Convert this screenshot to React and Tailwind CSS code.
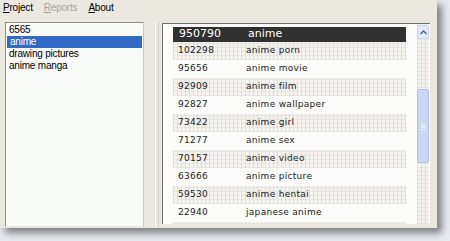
const rows = [
  ["102298", "anime porn"],
  ["95656", "anime movie"],
  ["92909", "anime film"],
  ["92827", "anime wallpaper"],
  ["73422", "anime girl"],
  ["71277", "anime sex"],
  ["70157", "anime video"],
  ["63666", "anime picture"],
  ["59530", "anime hentai"],
  ["22940", "japanese anime"],
]

const groups = ["6565", "anime", "drawing pictures", "anime manga"]

const pattern =
  "bg-[#f5f4f0] bg-[repeating-linear-gradient(90deg,#e2dfd7_0px,#e2dfd7_1px,transparent_1px,transparent_4px),repeating-linear-gradient(0deg,#e8e6df_0px,#e8e6df_1px,transparent_1px,transparent_4px)]"

function MenuBar() {
  return (
    <div className="flex h-[15px] items-center gap-[11px] px-[3px] text-[10px] tracking-[-0.2px] text-black">
      <span>
        <u>P</u>roject
      </span>
      <span className="text-[#a8a69c]">
        <u>R</u>eports
      </span>
      <span>
        <u>A</u>bout
      </span>
    </div>
  )
}

function GroupList() {
  return (
    <div className="h-[205px] w-[139px] border border-[#8f8d86] border-r-[#c9c6bd] border-b-[#e4e1d9] bg-[#f9fbf8] pt-px text-[10px] tracking-[-0.2px] text-black">
      {groups.map((g) => (
        <div
          key={g}
          className={`h-[12px] px-[3px] leading-[12px] ${g === "anime" ? "mx-px bg-[#316ac5] px-[2px] text-white" : ""}`}
        >
          {g}
        </div>
      ))}
    </div>
  )
}

function ScrollBar() {
  return (
    <div className={`flex w-[12px] flex-col ${pattern}`}>
      <div className="mt-px flex h-[14px] items-center justify-center rounded-[2px] border border-[#c6d3f1] bg-[#e2e9f9]">
        <svg width="7" height="5" viewBox="0 0 7 5">
          <path d="M0.5 4 L3.5 1 L6.5 4" fill="none" stroke="#4d6185" strokeWidth="1.4" />
        </svg>
      </div>
      <div className="mt-[50px] flex h-[74px] flex-col items-center justify-center gap-px rounded-[2px] border border-[#afc0e8] bg-[#c9d7f5]">
        <div className="h-px w-[5px] bg-[#eef3fd]" />
        <div className="h-px w-[5px] bg-[#eef3fd]" />
        <div className="h-px w-[5px] bg-[#eef3fd]" />
        <div className="h-px w-[5px] bg-[#eef3fd]" />
      </div>
    </div>
  )
}

function KeywordTable() {
  return (
    <div className="flex h-[201px] w-[268px] overflow-hidden border-l border-t border-[#6f6d68] bg-[#fbfcfa]">
      <div className="flex w-[254px] flex-col pl-[10px] pr-[11px] pt-[3px] font-['DejaVu_Sans',sans-serif]">
        <div className="flex h-[15px] shrink-0 items-center bg-[#313131] pl-[6px] text-[11px] text-white">
          <span className="w-[69px]">950790</span>
          <span>anime</span>
        </div>
        {rows.map(([n, k], i) => (
          <div
            key={n}
            className={`flex h-[18px] shrink-0 items-center pl-[5px] text-[9px] tracking-[0.3px] text-[#222] ${i % 2 === 0 ? pattern : ""}`}
          >
            <span className="w-[68px]">{n}</span>
            <span>{k}</span>
          </div>
        ))}
        <div className={`h-[18px] shrink-0 ${pattern}`} />
      </div>
      <ScrollBar />
    </div>
  )
}

export default function App() {
  return (
    <div className="h-[241px] w-[450px] overflow-hidden bg-[#e6eaef] font-['Liberation_Sans',Arial,sans-serif]">
      <div className="h-[228px] w-[437px] bg-[#ebe8e0] shadow-[5px_5px_7px_rgba(0,0,0,0.45)]">
        <MenuBar />
        <div className="flex pt-[7px]">
          <div className="pl-[5px]">
            <GroupList />
          </div>
          <div className="ml-[11px] flex w-[7px] justify-start">
            <div className="h-[205px] w-px bg-[#f7f6f2]" />
            <div className="ml-[2px] h-[205px] w-px bg-[#d2cfc6]" />
          </div>
          <div className="pt-px">
            <KeywordTable />
          </div>
        </div>
      </div>
    </div>
  )
}
